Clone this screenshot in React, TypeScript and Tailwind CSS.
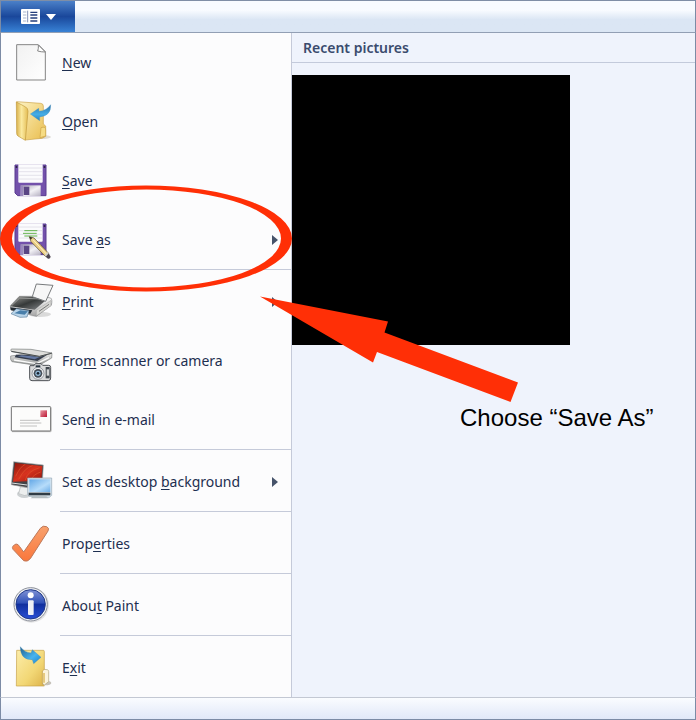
import type { ReactNode } from 'react';

interface MenuItem {
  before?: string;
  accessKey: string;
  after?: string;
  icon: ReactNode;
  submenu?: boolean;
  separator?: boolean;
}

function Icon({ viewBox, children }: { viewBox: string; children: ReactNode }) {
  return (
    <svg viewBox={viewBox} className="w-[48px] h-[51px] shrink-0" aria-hidden="true">
      {children}
    </svg>
  );
}

function NewIcon() {
  return (
    <Icon viewBox="24 111 144 153">
      <defs>
        <linearGradient id="paper" x1="0" y1="0" x2="1" y2="1">
          <stop offset="0" stopColor="#f1f1f1" />
          <stop offset="1" stopColor="#ffffff" />
        </linearGradient>
      </defs>
      <path d="M50 134H115L136 155V240H50Z" fill="url(#paper)" stroke="#858585" strokeWidth="3" strokeLinejoin="round" />
      <path d="M115 135Q116 146 113 153Q123 156 136 156Z" fill="#fff" stroke="#858585" strokeWidth="3" strokeLinejoin="round" />
    </Icon>
  );
}

function OpenIcon() {
  return (
    <Icon viewBox="24 288 144 153">
      <defs>
        <linearGradient id="flap" x1="0" y1="0" x2="1" y2="0">
          <stop offset="0" stopColor="#d9b04b" />
          <stop offset="0.45" stopColor="#fbeaa0" />
          <stop offset="1" stopColor="#e3bb52" />
        </linearGradient>
        <linearGradient id="folderBack" x1="0" y1="0" x2="1" y2="1">
          <stop offset="0" stopColor="#fdf3c4" />
          <stop offset="1" stopColor="#e9bd4d" />
        </linearGradient>
        <linearGradient id="blueArrow" x1="0" y1="0" x2="0" y2="1">
          <stop offset="0" stopColor="#2c6fa8" />
          <stop offset="0.6" stopColor="#45aee6" />
          <stop offset="1" stopColor="#2481c4" />
        </linearGradient>
      </defs>
      <ellipse cx="122" cy="411" rx="31" ry="6" fill="#dedbd4" />
      <path d="M50 305L122 310Q130 311 130 318V372L137 378V409L126 415L76 420Z" fill="url(#folderBack)" stroke="#cba348" strokeWidth="2" />
      <path d="M123 383Q137 378 137 390V408L120 413Z" fill="#f6dc83" stroke="#cba348" strokeWidth="2" />
      <path d="M49 306L77 321Q84 325 84 334L76 421L54 408Q50 406 50 399Z" fill="url(#flap)" stroke="#c19a3d" strokeWidth="2" strokeLinejoin="round" />
      <path d="M91 342L116 325L117 334Q140 332 152 314Q154 347 119 351V362Z" fill="url(#blueArrow)" stroke="#4a91bd" strokeWidth="1" />
    </Icon>
  );
}

// Shared by Save and Save as
function Floppy() {
  return (
    <>
      <defs>
        <linearGradient id="floppyMetal" x1="0" y1="0" x2="1" y2="1">
          <stop offset="0" stopColor="#a7a2b3" />
          <stop offset="0.55" stopColor="#f3f2f6" />
          <stop offset="1" stopColor="#b6b1c2" />
        </linearGradient>
      </defs>
      <path d="M45 45H138V137H53L45 129Z" fill="#7351ab" />
      <path d="M45 45H138V137H53L45 129Z" fill="none" stroke="#5a3d90" strokeWidth="3" />
      <path d="M55 43H128V95Q128 98 125 98H58Q55 98 55 95Z" fill="#fbfbfd" />
      <path d="M56 54H127M56 65H127M56 76H127M56 87H127" stroke="#d9d7e2" strokeWidth="2" />
      <path d="M47 48H52V54H47ZM131 48H136V54H131Z" fill="#2e2547" />
      <path d="M62 106H122V138H62Z" fill="url(#floppyMetal)" />
      <path d="M71 110H88V135H71Z" fill="#5a4684" />
      <path d="M62 106H70V138H62Z" fill="#9b89bd" />
    </>
  );
}

function SaveIcon() {
  return (
    <Icon viewBox="24 15 144 153">
      <Floppy />
    </Icon>
  );
}

function SaveAsIcon() {
  return (
    <Icon viewBox="24 15 144 153">
      <Floppy />
      <path d="M73 65H112M69 73H110M73 81H112" stroke="#62b34b" strokeWidth="3" />
      <path d="M88 83L102 87L146 133L137 143L93 98Z" fill="#ecd087" stroke="#4d4028" strokeWidth="2" />
      <path d="M99 92L141 137" stroke="#fff3c6" strokeWidth="3" />
      <path d="M88 83L97 86L92 92Z" fill="#2c281e" />
      <path d="M137 143L146 133L152 143Q150 151 144 149Z" fill="#4b4450" />
      <path d="M134 139L142 129L146 133L137 143Z" fill="#d2d0c8" />
    </Icon>
  );
}

function PrintIcon() {
  return (
    <Icon viewBox="24 3 144 153">
      <defs>
        <linearGradient id="printerTop" x1="0" y1="0" x2="1" y2="1">
          <stop offset="0" stopColor="#9a9a96" />
          <stop offset="0.5" stopColor="#363939" />
          <stop offset="1" stopColor="#85878a" />
        </linearGradient>
        <linearGradient id="printerBody" x1="0" y1="0" x2="0" y2="1">
          <stop offset="0" stopColor="#ffffff" />
          <stop offset="1" stopColor="#a5a5a5" />
        </linearGradient>
      </defs>
      <ellipse cx="119" cy="118" rx="34" ry="8" fill="#dadada" />
      <path d="M31 92L58 64H126L152 69Q158 73 154 91L109 124L32 104Z" fill="url(#printerBody)" stroke="#898b8d" strokeWidth="2" />
      <path d="M58 64L123 66L135 78L104 104L31 94Z" fill="url(#printerTop)" />
      <path d="M35 92L59 69L121 72L130 78" fill="none" stroke="#b5b7b5" strokeWidth="2" />
      <path d="M97 65L109 27L159 31L137 79Z" fill="#f7f7f7" stroke="#777a7c" strokeWidth="3" strokeLinejoin="round" />
      <path d="M31 97L97 106L91 116L33 106Z" fill="#252c33" />
      <path d="M49 101L87 107L81 126L60 127L33 116Z" fill="#b9d4e9" stroke="#5e7e9b" strokeWidth="2" />
      <path d="M61 106L84 109L74 119L43 115Z" fill="#487eaa" />
      <path d="M109 106L153 76V92L109 123Z" fill="#d6d6d3" stroke="#8b8b8b" strokeWidth="1" />
      <path d="M117 109L147 88" stroke="#777" strokeWidth="3" />
    </Icon>
  );
}

function ScannerIcon() {
  return (
    <Icon viewBox="24 180 144 153">
      <defs>
        <linearGradient id="scannerBody" x1="0" y1="0" x2="0" y2="1">
          <stop offset="0" stopColor="#eeeeec" />
          <stop offset="1" stopColor="#8e9090" />
        </linearGradient>
      </defs>
      <path d="M32 243L91 235L156 235L155 249L116 272L36 260Q30 255 32 243Z" fill="url(#scannerBody)" stroke="#7d8080" strokeWidth="2" />
      <path d="M48 239L119 241L142 239L112 258L44 247Z" fill="#343c4c" />
      <path d="M65 241L119 246L104 253L53 244Z" fill="#6579a3" />
      <path d="M34 222L93 223L156 234L118 245L35 230Q30 225 34 222Z" fill="#dededb" stroke="#777b7b" strokeWidth="2" />
      <path d="M34 229L118 244L155 235" fill="none" stroke="#4c5050" strokeWidth="3" />
      <path d="M42 255L110 266L147 248" stroke="#fafafa" strokeWidth="4" fill="none" />
      <path d="M90 272H102L106 266H123L128 271H146Q152 271 152 277V309Q152 317 145 317H96Q89 317 89 310V276Q89 273 90 272Z" fill="#d9dadb" stroke="#4c5055" strokeWidth="3" />
      <path d="M137 276H149V310H137Z" fill="#3f464d" />
      <path d="M140 283H147V302H140Z" fill="#d2d4d5" />
      <path d="M107 271H121V277H107Z" fill="#25323e" />
      <circle cx="114" cy="295" r="18" fill="#f1f2f4" stroke="#697078" strokeWidth="2" />
      <circle cx="114" cy="295" r="13" fill="#454d57" />
      <circle cx="114" cy="295" r="8" fill="#92b8d7" />
      <circle cx="114" cy="295" r="4" fill="#19222d" />
    </Icon>
  );
}

function MailIcon() {
  return (
    <Icon viewBox="24 -3 144 153">
      <defs>
        <linearGradient id="stamp" x1="0" y1="0" x2="1" y2="1">
          <stop offset="0" stopColor="#e99aa5" />
          <stop offset="1" stopColor="#bc1733" />
        </linearGradient>
      </defs>
      <path d="M36 110H153V38" fill="none" stroke="#bfbfbf" strokeWidth="3" />
      <rect x="34" y="35" width="118" height="73" rx="2" fill="#fcfcfb" stroke="#6f6f6f" strokeWidth="3" />
      <rect x="121" y="46" width="20" height="20" fill="url(#stamp)" />
      <path d="M60 76H119M60 84H124M60 93H111" stroke="#a3a3a3" strokeWidth="2" />
    </Icon>
  );
}

function DesktopIcon() {
  return (
    <Icon viewBox="24 183 144 153">
      <defs>
        <linearGradient id="redScreen" x1="0" y1="0" x2="1" y2="1">
          <stop offset="0" stopColor="#8d160b" />
          <stop offset="0.5" stopColor="#d8331f" />
          <stop offset="1" stopColor="#95160c" />
        </linearGradient>
        <linearGradient id="blueScreen" x1="0" y1="0" x2="1" y2="1">
          <stop offset="0" stopColor="#62a7e6" />
          <stop offset="0.6" stopColor="#b6dcfa" />
          <stop offset="1" stopColor="#6eaee8" />
        </linearGradient>
      </defs>
      <ellipse cx="73" cy="297" rx="22" ry="12" fill="#cdd1d3" />
      <path d="M61 276H84L92 298Q73 306 56 296Z" fill="#eceeee" stroke="#b2b6b8" strokeWidth="2" />
      <path d="M41 200L130 210L127 263L84 278L34 269Z" fill="#424347" stroke="#aaa" strokeWidth="2" />
      <path d="M45 204L127 213L124 257L39 260Z" fill="url(#redScreen)" />
      <path d="M47 244Q61 214 76 208M56 253Q75 217 98 212M76 255Q82 228 119 218M94 252Q101 238 122 231" fill="none" stroke="#e2552f" strokeWidth="2" />
      <path d="M35 264L81 270" stroke="#dfe1e1" strokeWidth="3" />
      <path d="M83 249H155V301L148 307L88 304L83 298Z" fill="#dce5eb" stroke="#91a7b8" strokeWidth="2" />
      <path d="M88 253H151V291H88Z" fill="url(#blueScreen)" />
      <path d="M86 293H151V301H86Z" fill="#303c46" />
      <path d="M98 304H139L146 310H92Z" fill="#b5bdc1" />
    </Icon>
  );
}

function CheckIcon() {
  return (
    <Icon viewBox="24 9 144 153">
      <defs>
        <linearGradient id="tick" x1="0" y1="0" x2="0" y2="1">
          <stop offset="0" stopColor="#f8a16d" />
          <stop offset="1" stopColor="#fa773c" />
        </linearGradient>
      </defs>
      <path d="M40 92L48 87Q55 87 59 95L71 111L121 40Q129 30 140 35Q149 39 144 48L91 131Q82 142 71 137L39 103Q35 97 40 92Z" fill="url(#tick)" stroke="#bd795b" strokeWidth="3" strokeLinejoin="round" />
    </Icon>
  );
}

function AboutIcon() {
  return (
    <Icon viewBox="24 195 144 153">
      <defs>
        <linearGradient id="infoBall" x1="0" y1="0" x2="0" y2="1">
          <stop offset="0" stopColor="#8193d5" />
          <stop offset="0.45" stopColor="#2f51b8" />
          <stop offset="0.5" stopColor="#102f9e" />
          <stop offset="1" stopColor="#294fd5" />
        </linearGradient>
      </defs>
      <circle cx="94" cy="270" r="53" fill="#e4e4e5" />
      <circle cx="92" cy="268" r="50" fill="#eef0f2" stroke="#8e929d" strokeWidth="3" />
      <circle cx="92" cy="268" r="44" fill="url(#infoBall)" stroke="#203989" strokeWidth="3" />
      <circle cx="92" cy="241" r="9" fill="#fff" />
      <rect x="84" y="256" width="17" height="44" rx="3" fill="#eef0f5" />
    </Icon>
  );
}

function ExitIcon() {
  return (
    <Icon viewBox="24 51 144 153">
      <defs>
        <linearGradient id="exitFolder" x1="0" y1="0" x2="1" y2="1">
          <stop offset="0" stopColor="#fcedaa" />
          <stop offset="0.6" stopColor="#f2d775" />
          <stop offset="1" stopColor="#ddb34a" />
        </linearGradient>
        <linearGradient id="exitArrow" x1="0" y1="0" x2="1" y2="1">
          <stop offset="0" stopColor="#20608e" />
          <stop offset="0.6" stopColor="#48b4ee" />
          <stop offset="1" stopColor="#1780cc" />
        </linearGradient>
      </defs>
      <ellipse cx="136" cy="174" rx="18" ry="7" fill="#c7c3ba" />
      <path d="M126 134Q128 132 142 134Q146 135 146 140V170L133 180L126 174Z" fill="#fbf4dd" stroke="#b1a47a" strokeWidth="2" />
      <path d="M132 144V173" stroke="#dbb64f" strokeWidth="4" />
      <path d="M50 76H130Q133 76 133 80V133L127 138V177L133 183H49Z" fill="url(#exitFolder)" stroke="#c6a047" strokeWidth="2" />
      <path d="M61 65Q73 82 93 84L97 74L123 97L101 116L97 104Q61 105 61 65Z" fill="url(#exitArrow)" stroke="#3c87b3" strokeWidth="1" />
    </Icon>
  );
}

const menuItems: MenuItem[] = [
  { accessKey: 'N', after: 'ew', icon: <NewIcon /> },
  { accessKey: 'O', after: 'pen', icon: <OpenIcon /> },
  { accessKey: 'S', after: 'ave', icon: <SaveIcon /> },
  { before: 'Save ', accessKey: 'a', after: 's', icon: <SaveAsIcon />, submenu: true, separator: true },
  { accessKey: 'P', after: 'rint', icon: <PrintIcon />, submenu: true },
  { before: 'Fro', accessKey: 'm', after: ' scanner or camera', icon: <ScannerIcon /> },
  { before: 'Sen', accessKey: 'd', after: ' in e-mail', icon: <MailIcon />, separator: true },
  { before: 'Set as desktop ', accessKey: 'b', after: 'ackground', icon: <DesktopIcon />, submenu: true, separator: true },
  { before: 'Prop', accessKey: 'e', after: 'rties', icon: <CheckIcon />, separator: true },
  { before: 'Abou', accessKey: 't', after: ' Paint', icon: <AboutIcon />, separator: true },
  { before: 'E', accessKey: 'x', after: 'it', icon: <ExitIcon /> },
];

function MenuRow({ item }: { item: MenuItem }) {
  return (
    <li>
      <button type="button" className="flex h-[59px] w-full items-center pl-[7px] pr-[13px] text-left">
        {item.icon}
        <span className="ml-[6px] flex-1 whitespace-nowrap">
          {item.before}
          <span className="underline underline-offset-2">{item.accessKey}</span>
          {item.after}
        </span>
        {item.submenu && (
          <svg viewBox="0 0 6 10" className="h-[10px] w-[6px] shrink-0" aria-hidden="true">
            <path d="M0 0L6 5L0 10Z" fill="#46536a" />
          </svg>
        )}
      </button>
      {item.separator && <div className="mb-[2px] ml-[59px] border-t border-[#c5cad9]" />}
    </li>
  );
}

function Annotations() {
  return (
    <svg className="pointer-events-none absolute left-0 top-0 h-[420px] w-[530px]" viewBox="0 0 530 420" aria-hidden="true">
      <path
        fill="#ff2f06"
        fillRule="evenodd"
        d="M0 238.5A146 53 0 1 1 292 238.5A146 53 0 1 1 0 238.5ZM12 238.5A134.5 49 0 1 0 281 238.5A134.5 49 0 1 0 12 238.5Z"
      />
      <path fill="#ff2f06" d="M260 296.5L388 321.5L384.5 332.5L518 382.5L510.5 402L377 352L373 362.5Z" />
    </svg>
  );
}

export default function App() {
  return (
    <div className="relative flex min-h-screen flex-col overflow-hidden border-b border-[#7c8ba5] bg-[#eff3fc] font-['Noto_Sans','Open_Sans',sans-serif] text-[14px] leading-5 text-[#1e2f50]">
      <header className="flex h-[33px] border border-x-[#7c8ba5] border-t-[#7f8ea6] border-b-[#929fb4] bg-linear-to-b from-[#f8fbff] from-30% to-[#dbe6f4] to-60%">
        <button
          type="button"
          aria-label="Paint menu"
          className="flex w-[74px] items-center justify-center gap-[6px] bg-linear-to-b from-[#4b80c8] via-[#1a479b] via-50% to-[#3982d5]"
        >
          <svg viewBox="0 0 57 45" className="h-[15px] w-[19px]" aria-hidden="true">
            <rect width="57" height="45" rx="3" fill="#fff" />
            <path d="M6 9H16M6 18H16M6 27H16M6 36H16" stroke="#c6cede" strokeWidth="4" />
            <path d="M20 5V40" stroke="#8794b7" strokeWidth="3" />
            <path d="M28 10H49M28 18H49M28 27H49M28 36H49" stroke="#263f7c" strokeWidth="4" />
          </svg>
          <svg viewBox="0 0 10 6" className="h-[6px] w-[10px]" aria-hidden="true">
            <path d="M0 0H10L5 6Z" fill="#fff" />
          </svg>
        </button>
      </header>

      <main className="flex flex-1 border-x border-[#7c8ba5]">
        <nav className="w-[291px] shrink-0 border-r border-[#c5cad9] bg-[#fcfcfd]">
          <ul>
            {menuItems.map((item) => (
              <MenuRow key={`${item.before ?? ''}${item.accessKey}`} item={item} />
            ))}
          </ul>
        </nav>
        <section className="min-w-0 flex-1">
          <h2 className="mb-3 border-b border-[#c3cadb] pb-1 pl-[11px] pt-[5px] text-[14px] font-semibold text-[#3a4b6e]">
            Recent pictures
          </h2>
          <div className="h-[270px] w-[278px] max-w-full bg-black" />
          <p className="mt-[58px] whitespace-nowrap pl-[168px] font-['Liberation_Sans',Arial,sans-serif] text-[24px] leading-[30px] text-black">
            Choose “Save As”
          </p>
        </section>
      </main>

      <footer className="h-[22px] border-x border-t border-x-[#7c8ba5] border-t-[#c3c8d3] bg-linear-to-b from-[#fafcff] to-[#e1e8f8]" />
      <Annotations />
    </div>
  );
}
